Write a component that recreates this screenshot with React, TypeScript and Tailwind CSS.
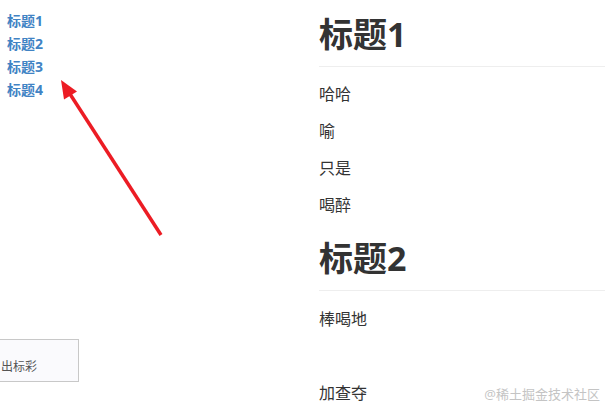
const headings = ["标题1", "标题2", "标题3", "标题4"];

function Arrow() {
  return (
    <svg
      className="pointer-events-none absolute left-0 top-0"
      width="200"
      height="260"
      viewBox="0 0 200 260"
    >
      <line x1="161" y1="235" x2="70" y2="94" stroke="#ec1c24" strokeWidth="3.5" />
      <polygon points="61,80 77,91.5 64,99.5" fill="#ec1c24" />
    </svg>
  );
}

export default function App() {
  return (
    <div className="relative flex h-[407px] w-full overflow-hidden bg-white font-['Open_Sans','Noto_Sans_CJK_SC',sans-serif] text-[#333]">
      {/* Sidebar outline */}
      <aside className="flex w-[319px] shrink-0 flex-col">
        <nav className="flex flex-col pl-[7px] pt-[9px]">
          {headings.map((h) => (
            <a key={h} href="#" className="text-[14px] font-bold leading-[23px] text-[#4183c4]">
              {h}
            </a>
          ))}
        </nav>
        <div className="ml-[-22px] mt-[238px] flex h-[43px] w-[101px] items-end overflow-hidden border border-[#c8c8c8] bg-[#fafafd] pb-[7px]">
          <span className="ml-[22px] whitespace-nowrap text-[12px] leading-[14px] text-[#555]">出标彩</span>
        </div>
      </aside>

      {/* Content */}
      <main className="min-w-0 flex-1 pt-[12px]">
        <h1 className="border-b border-[#eee] pb-[10px] text-[34px] font-bold leading-[44px] text-[#333]">标题1</h1>
        <p className="mt-[15px] text-[16px] leading-[24px]">哈哈</p>
        <p className="mt-[13px] text-[16px] leading-[24px]">喻</p>
        <p className="mt-[13px] text-[16px] leading-[24px]">只是</p>
        <p className="mt-[13px] text-[16px] leading-[24px]">喝醉</p>
        <h1 className="mt-[19px] border-b border-[#eee] pb-[10px] text-[34px] font-bold leading-[44px] text-[#333]">标题2</h1>
        <p className="mt-[16px] text-[16px] leading-[24px]">棒喝地</p>
        <p className="mt-[13px] text-[16px] leading-[24px]">&nbsp;</p>
        <p className="mt-[13px] text-[16px] leading-[24px]">加查夺</p>
      </main>

      <Arrow />
      <span className="pointer-events-none absolute bottom-[4px] right-[5px] text-[13px] leading-[18px] text-[#c4c4c4]">
        @稀土掘金技术社区
      </span>
    </div>
  );
}
